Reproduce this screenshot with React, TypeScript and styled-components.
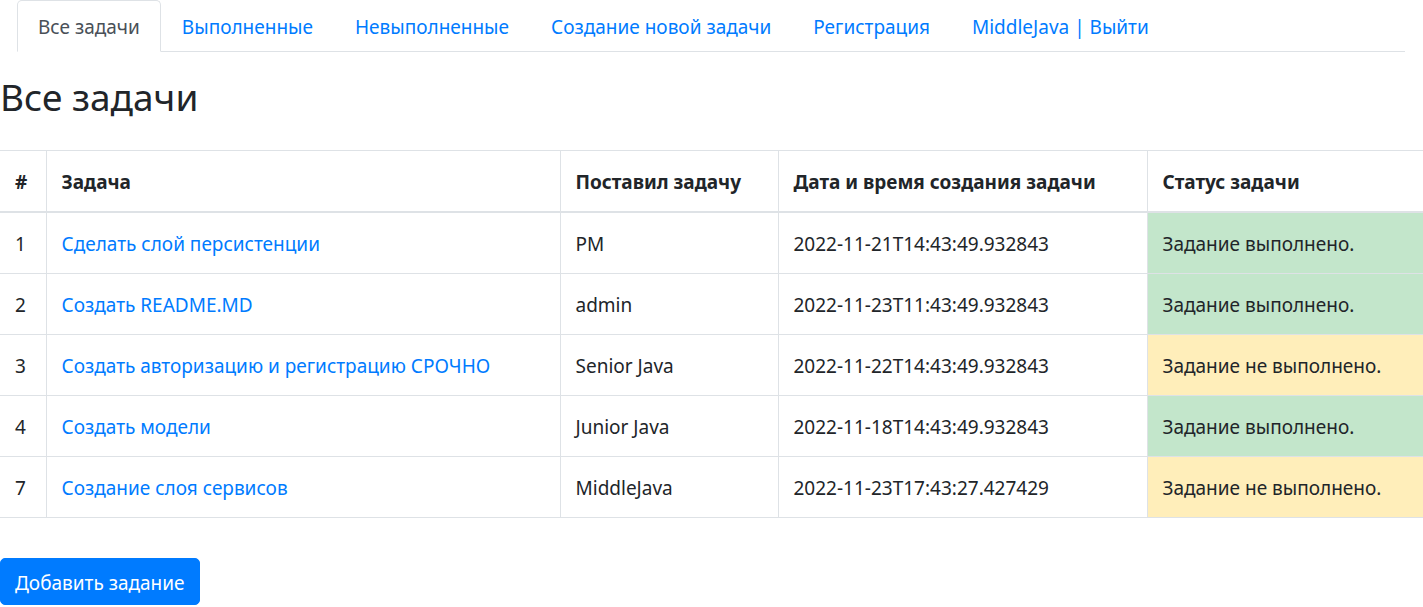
import styled, { createGlobalStyle } from 'styled-components';

const GlobalStyle = createGlobalStyle`
  html, body {
    margin: 0;
    padding: 0;
    background: #fff;
  }
  body {
    font-family: "Noto Sans", "Open Sans", sans-serif;
    font-size: 19px;
    line-height: 30px;
    color: #212529;
  }
  * {
    box-sizing: border-box;
  }
`;

const Page = styled.div`
  display: flex;
  flex-direction: column;
`;

const Nav = styled.nav`
  display: flex;
  margin: 0 18px 0 17px;
  border-bottom: 1px solid #dee2e6;
`;

const Tab = styled.a<{ $active?: boolean }>`
  display: block;
  padding: 11px 20px 9px;
  margin-bottom: -1px;
  border: 1px solid transparent;
  border-color: ${(p) => (p.$active ? '#dee2e6 #dee2e6 #fff' : 'transparent')};
  border-top-left-radius: 5px;
  border-top-right-radius: 5px;
  color: ${(p) => (p.$active ? '#495057' : '#007bff')};
  background: ${(p) => (p.$active ? '#fff' : 'transparent')};
  text-decoration: none;
  cursor: pointer;
`;

const Title = styled.h1`
  margin: 23px 0 31px;
  font-size: 37px;
  font-weight: 400;
  line-height: 44px;
`;

const Table = styled.table`
  width: 100%;
  border-collapse: collapse;
  margin-bottom: 20px;
  color: #212529;
`;

const HeadCell = styled.th<{ $w?: number }>`
  width: ${(p) => (p.$w ? `${p.$w}px` : 'auto')};
  padding: 16px 15px 14px;
  text-align: left;
  font-weight: 700;
  vertical-align: bottom;
  border-top: 1px solid #dee2e6;
  border-bottom: 2px solid #dee2e6;
  border-left: 1px solid #dee2e6;

  &:first-child {
    border-left: none;
  }
`;

const Cell = styled.td<{ $status?: 'done' | 'todo' }>`
  padding: 16px 15px 14px;
  vertical-align: top;
  border-bottom: 1px solid #dee2e6;
  border-left: 1px solid #dee2e6;
  background: ${(p) =>
    p.$status === 'done' ? '#c3e6cb' : p.$status === 'todo' ? '#ffeeba' : 'transparent'};

  &:first-child {
    border-left: none;
  }
`;

const TaskLink = styled.a`
  color: #007bff;
  text-decoration: none;
`;

const Actions = styled.div`
  padding-top: 20px;
`;

const AddButton = styled.button`
  font-family: inherit;
  font-size: 19px;
  line-height: 30px;
  padding: 8.5px 14px 6.5px;
  color: #fff;
  background: #007bff;
  border: 1px solid #007bff;
  border-radius: 5px;
  cursor: pointer;
`;

const tabs = [
  'Все задачи',
  'Выполненные',
  'Невыполненные',
  'Создание новой задачи',
  'Регистрация',
  'MiddleJava | Выйти',
];

const tasks = [
  { id: 1, name: 'Сделать слой персистенции', author: 'PM', created: '2022-11-21T14:43:49.932843', done: true },
  { id: 2, name: 'Создать README.MD', author: 'admin', created: '2022-11-23T11:43:49.932843', done: true },
  { id: 3, name: 'Создать авторизацию и регистрацию СРОЧНО', author: 'Senior Java', created: '2022-11-22T14:43:49.932843', done: false },
  { id: 4, name: 'Создать модели', author: 'Junior Java', created: '2022-11-18T14:43:49.932843', done: true },
  { id: 7, name: 'Создание слоя сервисов', author: 'MiddleJava', created: '2022-11-23T17:43:27.427429', done: false },
];

const App = () => {
  return (
    <Page>
      <GlobalStyle />
      <Nav>
        {tabs.map((t, i) => (
          <Tab key={t} $active={i === 0}>
            {t}
          </Tab>
        ))}
      </Nav>
      <Title>Все задачи</Title>
      <Table>
        <thead>
          <tr>
            <HeadCell $w={46}>#</HeadCell>
            <HeadCell $w={514}>Задача</HeadCell>
            <HeadCell $w={218}>Поставил задачу</HeadCell>
            <HeadCell $w={369}>Дата и время создания задачи</HeadCell>
            <HeadCell>Статус задачи</HeadCell>
          </tr>
        </thead>
        <tbody>
          {tasks.map((t) => (
            <tr key={t.id}>
              <Cell>{t.id}</Cell>
              <Cell>
                <TaskLink>{t.name}</TaskLink>
              </Cell>
              <Cell>{t.author}</Cell>
              <Cell>{t.created}</Cell>
              <Cell $status={t.done ? 'done' : 'todo'}>
                {t.done ? 'Задание выполнено.' : 'Задание не выполнено.'}
              </Cell>
            </tr>
          ))}
        </tbody>
      </Table>
      <Actions>
        <AddButton>Добавить задание</AddButton>
      </Actions>
    </Page>
  );
};

export default App;
